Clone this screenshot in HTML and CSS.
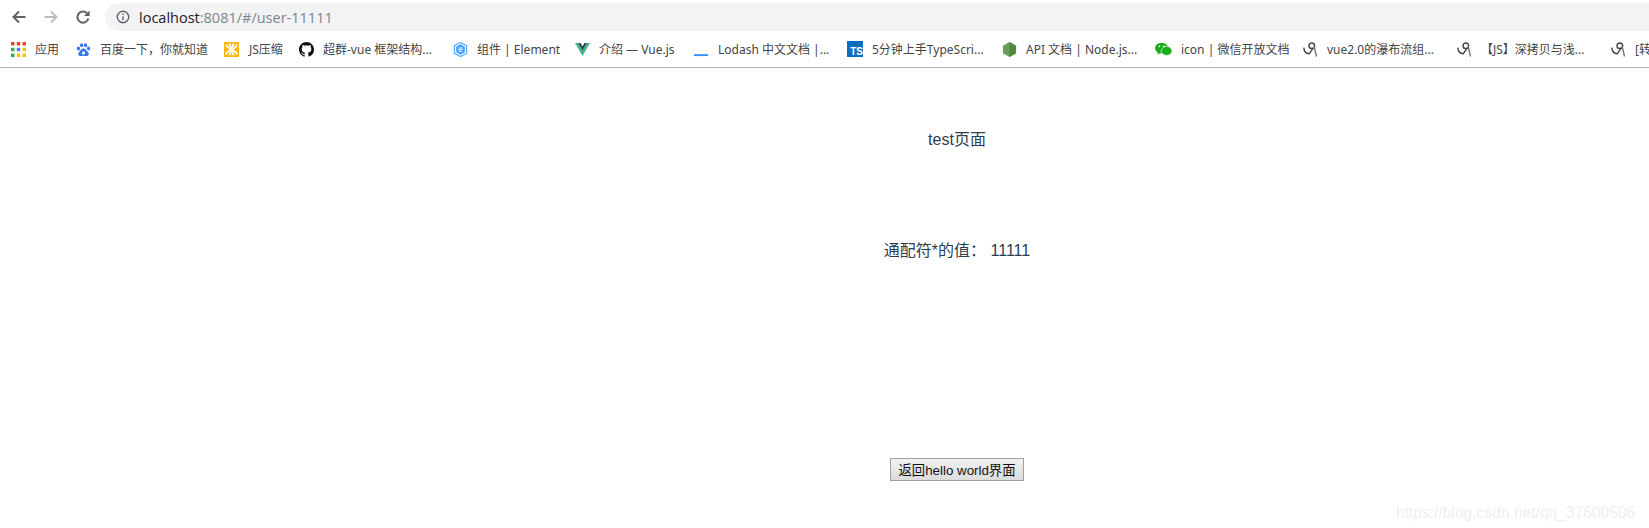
FILE: index.html
```html
<!DOCTYPE html>
<html lang="en">

<head>
    <meta charset="UTF-8">
    <meta name="viewport" content="width=device-width, initial-scale=1.0">
    <title>test</title>
    <link rel="stylesheet" href="styles.css">
</head>

<body>
    <header class="browser">
        <div class="toolbar">
            <svg class="nav-icon" viewBox="0 0 16 16"><path d="M14.5 8H2.5M8 2.5L2.5 8L8 13.5" fill="none" stroke="#5f6368" stroke-width="2"/></svg>
            <svg class="nav-icon" viewBox="0 0 16 16"><path d="M1.5 8H13.5M8 2.5L13.5 8L8 13.5" fill="none" stroke="#b9bbbe" stroke-width="2"/></svg>
            <svg class="nav-icon" viewBox="0 0 16 16"><path d="M13.4 9.6A5.6 5.6 0 1 1 12 4.2" fill="none" stroke="#5f6368" stroke-width="2"/><path d="M14.6 1.4V7H9z" fill="#5f6368"/></svg>
            <div class="address">
                <svg class="info-icon" viewBox="0 0 14 14"><circle cx="7" cy="7" r="5.7" fill="none" stroke="#5f6368" stroke-width="1.4"/><path d="M6.3 6.2H7.7V10.2H6.3zM6.3 3.6H7.7V5H6.3z" fill="#5f6368"/></svg>
                <span class="host">localhost</span><span class="url-rest">:8081/#/user-11111</span>
            </div>
        </div>
        <nav class="bookmarks">
            <a class="bookmark b-apps">
                <svg class="bm-icon" viewBox="0 0 13 13">
                    <rect x="0" y="0" width="3" height="3" fill="#ea4335"/><rect x="5" y="0" width="3" height="3" fill="#ea4335"/><rect x="10" y="0" width="3" height="3" fill="#ea4335"/>
                    <rect x="0" y="5" width="3" height="3" fill="#34a853"/><rect x="5" y="5" width="3" height="3" fill="#4285f4"/><rect x="10" y="5" width="3" height="3" fill="#fbbc05"/>
                    <rect x="0" y="10" width="3" height="3" fill="#34a853"/><rect x="5" y="10" width="3" height="3" fill="#fbbc05"/><rect x="10" y="10" width="3" height="3" fill="#fbbc05"/>
                </svg>
                <span>应用</span>
            </a>
            <a class="bookmark b-baidu">
                <svg class="bm-icon" viewBox="0 0 16 16" fill="#3078f0">
                    <ellipse cx="2.6" cy="7" rx="1.7" ry="2.1"/><ellipse cx="6" cy="3.4" rx="1.7" ry="2.2"/><ellipse cx="10.2" cy="3.4" rx="1.7" ry="2.2"/><ellipse cx="13.4" cy="7" rx="1.7" ry="2.1"/>
                    <path d="M8 7C5.6 7 5 9.4 3.4 10.6C1.6 12 2.4 15 5 15C6.4 15 7 14.6 8 14.6C9 14.6 9.8 15 11 15C13.6 15 14.4 12 12.6 10.6C11 9.4 10.4 7 8 7Z"/>
                    <circle cx="8" cy="11.6" r="1.7" fill="#fff"/>
                </svg>
                <span>百度一下，你就知道</span>
            </a>
            <a class="bookmark b-js">
                <svg class="bm-icon bm-wide" viewBox="0 0 17 17">
                    <rect width="17" height="17" fill="#fdb813"/>
                    <path d="M2 2L7.5 7.5L5 2H7.5L8.5 6L9.5 2H12L9.5 7.5L15 2V5L10.5 8.5L15 12V15L9.5 9.5L12 15H9.5L8.5 11L7.5 15H5L7.5 9.5L2 15V12L6.5 8.5L2 5Z" fill="#fff"/>
                </svg>
                <span>JS压缩</span>
            </a>
            <a class="bookmark b-github">
                <svg class="bm-icon" viewBox="0 0 16 16"><path fill="#111" d="M8 0C3.58 0 0 3.58 0 8c0 3.54 2.29 6.53 5.47 7.59.4.07.55-.17.55-.38 0-.19-.01-.82-.01-1.49-2.01.37-2.53-.49-2.69-.94-.09-.23-.48-.94-.82-1.13-.28-.15-.68-.52-.01-.53.63-.01 1.08.58 1.23.82.72 1.21 1.87.87 2.33.66.07-.52.28-.87.51-1.07-1.78-.2-3.64-.89-3.64-3.95 0-.87.31-1.59.82-2.15-.08-.2-.36-1.02.08-2.12 0 0 .67-.21 2.2.82.64-.18 1.32-.27 2-.27s1.36.09 2 .27c1.53-1.04 2.2-.82 2.2-.82.44 1.1.16 1.92.08 2.12.51.56.82 1.27.82 2.15 0 3.07-1.87 3.75-3.65 3.95.29.25.54.73.54 1.48 0 1.07-.01 1.93-.01 2.2 0 .21.15.46.55.38A8.01 8.01 0 0 0 16 8c0-4.42-3.58-8-8-8z"/></svg>
                <span>超群-vue 框架结构...</span>
            </a>
            <a class="bookmark b-element">
                <svg class="bm-icon" viewBox="0 0 16 16">
                    <path d="M8 .5L14.5 4V12L8 15.5L1.5 12V4Z" fill="#fff" stroke="#5aaeff" stroke-width="1.4"/>
                    <path d="M8 2.4L12.6 5V11L8 13.6L3.4 11V5Z" fill="#409eff"/>
                    <path d="M5.8 6.4H10.4M5.8 8.2H10.4M5.8 10H9.4" stroke="#fff" stroke-width="1"/>
                </svg>
                <span>组件 | Element</span>
            </a>
            <a class="bookmark b-vue">
                <svg class="bm-icon" viewBox="0 0 16 14"><path d="M0 0H3.2L8 8.2L12.8 0H16L8 14Z" fill="#41b883"/><path d="M3.2 0H6L8 3.4L10 0H12.8L8 8.2Z" fill="#35495e"/></svg>
                <span>介绍 — Vue.js</span>
            </a>
            <a class="bookmark b-lodash">
                <svg class="bm-icon" viewBox="0 0 16 16"><rect x="0" y="13" width="15" height="2" fill="#3492ff"/></svg>
                <span>Lodash 中文文档 |...</span>
            </a>
            <a class="bookmark b-ts">
                <span class="ts-icon">TS</span>
                <span>5分钟上手TypeScri...</span>
            </a>
            <a class="bookmark b-node">
                <svg class="bm-icon" viewBox="0 0 16 16"><path d="M8 0L15 4V12L8 16L1 12V4Z" fill="#6c9e5b"/><path d="M8 0L15 4V12L8 16Z" fill="#4f8a3f"/></svg>
                <span>API 文档 | Node.js...</span>
            </a>
            <a class="bookmark b-wechat">
                <svg class="bm-icon bm-wide" viewBox="0 0 17 14">
                    <ellipse cx="6.6" cy="5.6" rx="6.6" ry="5.4" fill="#1aad19"/><path d="M3 9L2.4 12L6 10Z" fill="#1aad19"/>
                    <ellipse cx="11.6" cy="8.4" rx="5.4" ry="4.5" fill="#1aad19" stroke="#fff" stroke-width=".6"/>
                    <circle cx="4.4" cy="3.8" r=".9" fill="#fff"/><circle cx="8.8" cy="3.8" r=".9" fill="#fff"/>
                </svg>
                <span>icon | 微信开放文档</span>
            </a>
            <a class="bookmark b-csdn1">
                <svg class="bm-icon" viewBox="0 0 16 16"><use href="#csdn-mark"/></svg>
                <span>vue2.0的瀑布流组...</span>
            </a>
            <a class="bookmark b-csdn2">
                <svg class="bm-icon" viewBox="0 0 16 16"><use href="#csdn-mark"/></svg>
                <span>【JS】深拷贝与浅...</span>
            </a>
            <a class="bookmark b-csdn3">
                <svg class="bm-icon" viewBox="0 0 16 16"><use href="#csdn-mark"/></svg>
                <span class="cut-label">[转载]</span>
            </a>
        </nav>
        <svg class="defs" width="0" height="0">
            <symbol id="csdn-mark" viewBox="0 0 16 16">
                <path d="M.8 6C1.2 9.6 3.4 12.4 6.6 12.6L10.4 7" fill="none" stroke="#444" stroke-width="1.5"/>
                <circle cx="9.4" cy="4" r="3" fill="none" stroke="#444" stroke-width="1.5"/>
                <path d="M12 5L14.4 15.5" fill="none" stroke="#777" stroke-width="1.5"/>
            </symbol>
        </svg>
    </header>

    <main class="page">
        <p class="title">test页面</p>
        <p class="wildcard">通配符*的值： 11111</p>
        <button class="back-btn">返回hello world界面</button>
    </main>

    <div class="watermark">https://blog.csdn.net/qq_37600506</div>
</body>

</html>
```

FILE: styles.css
```css
html, body {
    margin: 0;
    height: 100%;
    overflow: hidden;
    background-color: #fff;
}

body {
    position: relative;
    font-family: "Liberation Sans", "Noto Sans CJK SC", sans-serif;
}

.defs {
    position: absolute;
}

/* browser chrome */
.browser {
    height: 67px;
    border-bottom: 1px solid #b4b4b4;
    overflow: hidden;
}

.toolbar {
    display: flex;
    align-items: center;
    height: 28px;
    padding: 3px 0 0 11px;
}

.nav-icon {
    width: 16px;
    height: 16px;
    margin-right: 16px;
    flex: none;
}

.address {
    display: flex;
    align-items: center;
    flex: 1;
    height: 28px;
    margin-left: -2px;
    padding-left: 11px;
    background-color: #f1f3f4;
    border-radius: 14px 0 0 14px;
    font-family: "Open Sans", "Noto Sans", sans-serif;
    font-size: 14.5px;
}

.info-icon {
    width: 14px;
    height: 14px;
    margin-right: 9px;
}

.host {
    color: #202124;
}

.url-rest {
    color: #80868b;
}

.bookmarks {
    display: flex;
    align-items: center;
    height: 36px;
    font-family: "Noto Sans", "Noto Sans CJK SC", sans-serif;
    font-size: 12px;
    color: #444;
    white-space: nowrap;
}

.bookmark {
    display: flex;
    align-items: center;
    flex: none;
    gap: 9px;
}

.bm-icon {
    width: 15px;
    height: 15px;
    flex: none;
}

.bm-wide {
    width: 17px;
}

.ts-icon {
    display: flex;
    align-items: flex-end;
    justify-content: flex-end;
    width: 16px;
    height: 16px;
    background-color: #0a6fc2;
    color: #fff;
    font-family: "Liberation Sans", sans-serif;
    font-size: 10px;
    font-weight: bold;
    line-height: 10px;
}

/* each bookmark keeps the slot it has on the bar */
.b-apps { width: 65px; margin-left: 11px; }
.b-baidu { width: 147px; }
.b-js { width: 76px; }
.b-github { width: 154px; }
.b-element { width: 122px; }
.b-vue { width: 119px; }
.b-lodash { width: 153px; }
.b-ts { width: 155px; }
.b-node { width: 153px; }
.b-wechat { width: 148px; }
.b-csdn1 { width: 154px; }
.b-csdn2 { width: 154px; }
.b-csdn3 { width: 38px; }

/* last bookmark runs off the window, as in the shot */
.cut-label {
    width: 14px;
    overflow: hidden;
}

/* page content, centred on the full window the shot was cropped from */
.page {
    padding-left: 265px;
    text-align: center;
    color: #2c3e50;
    font-size: 16px;
    line-height: 18px;
}

.title {
    margin: 63px 0 0;
}

.wildcard {
    margin: 93px 0 0;
}

.back-btn {
    display: block;
    box-sizing: border-box;
    width: 134px;
    height: 23px;
    margin: 198px auto 0;
    padding: 0;
    border: 1px solid #a0a0a0;
    background: linear-gradient(#f2f2f2, #dcdcdc);
    color: #111;
    font-family: "Liberation Sans", "Noto Sans CJK SC", sans-serif;
    font-size: 13.33px;
}

.watermark {
    position: absolute;
    left: 1396px;
    top: 503px;
    color: #eeeeee;
    font-size: 15.6px;
    line-height: 19px;
    white-space: nowrap;
    filter: blur(0.4px);
}
```
